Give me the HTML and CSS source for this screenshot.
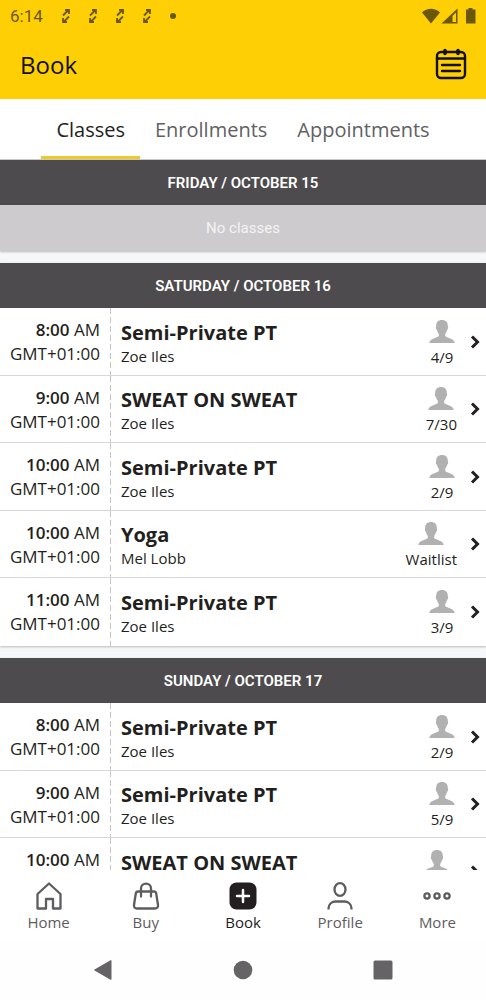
FILE: index.html
```html
<!DOCTYPE html>
<html lang="en">
<head>
    <meta charset="UTF-8">
    <meta name="viewport" content="width=device-width, initial-scale=1.0">
    <title>Book</title>
    <link rel="stylesheet" href="styles.css">
</head>
<body>
    <!-- shared icons -->
    <svg class="sprite" aria-hidden="true">
        <symbol id="sync" viewBox="0 0 8 14">
            <path d="M1 6.500 6 1.500M3 1h4v4M7 7.500 2 12.500M1 9v4h4" fill="none" stroke="currentColor" stroke-width="1.800"/>
        </symbol>
        <symbol id="avatar" viewBox="0 0 26 24">
            <path d="M13 1C9.300 1 7.200 3.200 7.200 6.400c0 .6 0 1-.2 1.300-.5.500 0 2.500.9 3 .4 1.800 1 3 1.900 4v2.100c0 2.200-8.800 1.800-9.500 7.200h25.400c-.7-5.400-9.500-5-9.500-7.200v-2.100c.9-1 1.500-2.200 1.900-4 .9-.5 1.400-2.500.9-3-.2-.3-.2-.7-.2-1.300C18.800 3.200 16.700 1 13 1z" fill="currentColor"/>
        </symbol>
        <symbol id="chevron" viewBox="0 0 10 14">
            <path d="M2 1.500 7.500 7 2 12.500" fill="none" stroke="currentColor" stroke-width="3"/>
        </symbol>
    </svg>

    <header class="top">
        <div class="status-bar">
            <span class="clock">6:14</span>
            <svg class="sync"><use href="#sync"/></svg>
            <svg class="sync"><use href="#sync"/></svg>
            <svg class="sync"><use href="#sync"/></svg>
            <svg class="sync"><use href="#sync"/></svg>
            <span class="dot"></span>
            <svg class="signals" viewBox="0 0 54 16" fill="currentColor">
                <path d="M0 4.500C5-.5 13-.5 18 4.500L9 15.500z"/>
                <path fill-rule="evenodd" d="M35.500.5v15h-16zM34 4.500l-3.500 3.500v6H34z"/>
                <path d="M46.500 1.500V0h4v1.500h3v14h-9.500v-14z"/>
            </svg>
        </div>
        <div class="title-bar">
            <h1>Book</h1>
            <button class="calendar" aria-label="Calendar">
                <svg viewBox="0 0 32 32" fill="none" stroke="currentColor" stroke-width="2.400" stroke-linecap="round">
                    <rect x="2" y="4" width="28" height="26" rx="4"/>
                    <path d="M2 10.500h28M7 17h18M7 23h18"/>
                    <path d="M10 2.500v3M23 2.500v3" stroke-width="3.500"/>
                </svg>
            </button>
        </div>
    </header>

    <nav class="tabs">
        <button class="tab active">Classes</button>
        <button class="tab">Enrollments</button>
        <button class="tab">Appointments</button>
    </nav>

    <main class="schedule">
        <section class="day">
            <h2>FRIDAY / OCTOBER 15</h2>
            <p class="empty">No classes</p>
        </section>

        <section class="day">
            <h2>SATURDAY / OCTOBER 16</h2>
            <a href="#" class="class-row">
                <div class="time"><b>8:00</b> AM<br>GMT+01:00</div>
                <div class="info"><h3>Semi-Private PT</h3><p>Zoe Iles</p></div>
                <div class="spots"><svg class="avatar"><use href="#avatar"/></svg>4/9</div>
                <svg class="chevron"><use href="#chevron"/></svg>
            </a>
            <a href="#" class="class-row">
                <div class="time"><b>9:00</b> AM<br>GMT+01:00</div>
                <div class="info"><h3>SWEAT ON SWEAT</h3><p>Zoe Iles</p></div>
                <div class="spots"><svg class="avatar"><use href="#avatar"/></svg>7/30</div>
                <svg class="chevron"><use href="#chevron"/></svg>
            </a>
            <a href="#" class="class-row">
                <div class="time"><b>10:00</b> AM<br>GMT+01:00</div>
                <div class="info"><h3>Semi-Private PT</h3><p>Zoe Iles</p></div>
                <div class="spots"><svg class="avatar"><use href="#avatar"/></svg>2/9</div>
                <svg class="chevron"><use href="#chevron"/></svg>
            </a>
            <a href="#" class="class-row">
                <div class="time"><b>10:00</b> AM<br>GMT+01:00</div>
                <div class="info"><h3>Yoga</h3><p>Mel Lobb</p></div>
                <div class="spots"><svg class="avatar"><use href="#avatar"/></svg>Waitlist</div>
                <svg class="chevron"><use href="#chevron"/></svg>
            </a>
            <a href="#" class="class-row">
                <div class="time"><b>11:00</b> AM<br>GMT+01:00</div>
                <div class="info"><h3>Semi-Private PT</h3><p>Zoe Iles</p></div>
                <div class="spots"><svg class="avatar"><use href="#avatar"/></svg>3/9</div>
                <svg class="chevron"><use href="#chevron"/></svg>
            </a>
        </section>

        <section class="day">
            <h2>SUNDAY / OCTOBER 17</h2>
            <a href="#" class="class-row">
                <div class="time"><b>8:00</b> AM<br>GMT+01:00</div>
                <div class="info"><h3>Semi-Private PT</h3><p>Zoe Iles</p></div>
                <div class="spots"><svg class="avatar"><use href="#avatar"/></svg>2/9</div>
                <svg class="chevron"><use href="#chevron"/></svg>
            </a>
            <a href="#" class="class-row">
                <div class="time"><b>9:00</b> AM<br>GMT+01:00</div>
                <div class="info"><h3>Semi-Private PT</h3><p>Zoe Iles</p></div>
                <div class="spots"><svg class="avatar"><use href="#avatar"/></svg>5/9</div>
                <svg class="chevron"><use href="#chevron"/></svg>
            </a>
            <a href="#" class="class-row">
                <div class="time"><b>10:00</b> AM<br>GMT+01:00</div>
                <div class="info"><h3>SWEAT ON SWEAT</h3><p>Zoe Iles</p></div>
                <div class="spots"><svg class="avatar"><use href="#avatar"/></svg>10/30</div>
                <svg class="chevron"><use href="#chevron"/></svg>
            </a>
        </section>
    </main>

    <nav class="bottom-nav">
        <a href="#">
            <svg viewBox="0 0 28 28" fill="none" stroke="currentColor" stroke-width="2.300">
                <path d="M2.500 26.500V12L14 1.500 25.500 12v14.500h-7.500v-9.500h-7v9.500z" stroke-linejoin="round"/>
            </svg>
            Home
        </a>
        <a href="#">
            <svg viewBox="0 0 28 28" fill="none" stroke="currentColor" stroke-width="2.300" stroke-linecap="round">
                <path d="M6 9.500h16c1.300 0 2 .7 2.200 2l1.800 11.500c.3 2-.8 3.500-3 3.500H5c-2.200 0-3.300-1.500-3-3.500l1.800-11.500c.2-1.300.9-2 2.200-2zM9 14.500V6.500c0-6.500 10-6.500 10 0v8"/>
            </svg>
            Buy
        </a>
        <a href="#" class="active">
            <svg viewBox="0 0 28 28">
                <rect x=".5" y=".5" width="27" height="27" rx="7" fill="currentColor"/>
                <path d="M14 8v12M8 14h12" stroke="#fff" stroke-width="2.500" stroke-linecap="round"/>
            </svg>
            Book
        </a>
        <a href="#">
            <svg viewBox="0 0 28 28" fill="none" stroke="currentColor" stroke-width="2.300">
                <ellipse cx="14" cy="7.500" rx="5.500" ry="6.300"/>
                <path d="M2.500 27.500v-1c0-4 3-7 7.500-7h8c4.500 0 7.500 3 7.500 7v1"/>
            </svg>
            Profile
        </a>
        <a href="#">
            <svg viewBox="0 0 28 28" fill="none" stroke="currentColor" stroke-width="2.300">
                <circle cx="4" cy="14" r="2.600"/>
                <circle cx="14" cy="14" r="2.600"/>
                <circle cx="24" cy="14" r="2.600"/>
            </svg>
            More
        </a>
    </nav>

    <div class="system-nav">
        <button aria-label="Back"><svg viewBox="0 0 20 20"><path d="M18.500 1v18a.7.7 0 0 1-1 .7L1.500 10.600a.7.7 0 0 1 0-1.200L17.500.3a.7.7 0 0 1 1 .7z"/></svg></button>
        <button aria-label="Home screen"><svg viewBox="0 0 20 20"><circle cx="10" cy="10" r="9.300"/></svg></button>
        <button aria-label="Recent apps"><svg viewBox="0 0 20 20"><rect x=".5" y=".5" width="19" height="19" rx="1.500"/></svg></button>
    </div>
</body>
</html>
```
FILE: styles.css
```css
* {
    margin: 0;
    padding: 0;
    box-sizing: border-box;
}
body {
    display: flex;
    flex-direction: column;
    height: 100vh;
    overflow: hidden;
    background: #fefefe;
    color: #231f20;
    font-family: "Open Sans", "Noto Sans", sans-serif;
}
button {
    border: none;
    background: none;
    font-family: inherit;
    color: inherit;
    cursor: pointer;
}
a {
    color: inherit;
    text-decoration: none;
}
svg {
    display: block;
    flex-shrink: 0;
}
.sprite {
    display: none;
}

/* header */
.top {
    background: #fecf04;
}
.status-bar {
    display: flex;
    align-items: center;
    height: 31px;
    padding: 0 10px;
    color: #6b5708;
}
.clock {
    width: 52px;
    font-family: Roboto, sans-serif;
    font-size: 17px;
}
.sync {
    width: 8px;
    height: 14px;
    margin-right: 19px;
}
.dot {
    width: 6px;
    height: 6px;
    border-radius: 50%;
    background: #6b5708;
}
.signals {
    width: 54px;
    height: 16px;
    margin-left: auto;
}
.title-bar {
    display: flex;
    align-items: center;
    justify-content: space-between;
    height: 68px;
    padding: 0 19px 2px 20px;
    color: #111;
}
.title-bar h1 {
    font-size: 24px;
    font-weight: 400;
}
.calendar svg {
    width: 32px;
    height: 32px;
}

/* tabs */
.tabs {
    display: flex;
    justify-content: center;
    height: 61px;
    background: #fff;
    border-bottom: 1px solid #c8c8c8;
}
.tab {
    padding: 3px 15px 0;
    font-size: 20px;
    color: #626063;
    border-bottom: 3px solid transparent;
}
.tab.active {
    color: #231f20;
    border-bottom-color: #f0ca24;
}

/* schedule */
.schedule {
    flex: 1;
    min-height: 0;
    overflow: hidden;
    background: #f6f7f9;
}
.day {
    margin-bottom: 12px;
    box-shadow: 0 1px 2px #bbb;
}
.day h2 {
    height: 45px;
    line-height: 47px;
    text-align: center;
    background: #4d4b4d;
    color: #fff;
    font-family: Roboto, sans-serif;
    font-size: 15px;
    font-weight: 600;
}
.empty {
    height: 46px;
    line-height: 46px;
    text-align: center;
    background: #cdcbcd;
    color: #f3f3f3;
    font-family: Roboto, sans-serif;
    font-size: 15px;
}
.class-row {
    display: flex;
    align-items: center;
    height: 68px;
    padding-right: 6px;
    background: #fff;
    border-bottom: 1px solid #d8d8d8;
}
.class-row:nth-of-type(even) {
    height: 67px;
}
.class-row:last-child {
    border-bottom: none;
}
.time {
    align-self: stretch;
    width: 111px;
    padding: 10px 11px 0 0;
    /* dashed divider */
    background: repeating-linear-gradient(#c4c4c4 0 6px, #fff 6px 9px) right / 1px 100% no-repeat;
    text-align: right;
    font-size: 17px;
    line-height: 24px;
}
.time b {
    font-weight: 600;
}
.info {
    flex: 1;
    padding: 2px 0 0 10px;
}
.info h3 {
    font-size: 20px;
    font-weight: 700;
    line-height: 26px;
}
.info p {
    font-size: 15px;
    line-height: 20px;
}
.spots {
    display: flex;
    flex-direction: column;
    align-items: center;
    gap: 4px;
    min-width: 30px;
    padding-top: 2px;
    margin-right: 13px;
    font-size: 15px;
    line-height: 20px;
}
.avatar {
    width: 26px;
    height: 24px;
    color: #b1b1b1;
}
.chevron {
    width: 10px;
    height: 14px;
}

/* bottom navigation */
.bottom-nav {
    display: flex;
    height: 70px;
    padding-top: 12px;
    background: #fff;
}
.bottom-nav a {
    display: flex;
    flex: 1;
    flex-direction: column;
    align-items: center;
    gap: 2px;
    color: #5e5c5f;
    font-size: 15px;
    line-height: 20px;
}
.bottom-nav a.active {
    color: #231f20;
}
.bottom-nav svg {
    width: 28px;
    height: 28px;
}
.system-nav {
    display: flex;
    justify-content: space-around;
    align-items: center;
    height: 60px;
    padding: 0 33px;
}
.system-nav svg {
    width: 20px;
    height: 20px;
    fill: #656366;
}
```
